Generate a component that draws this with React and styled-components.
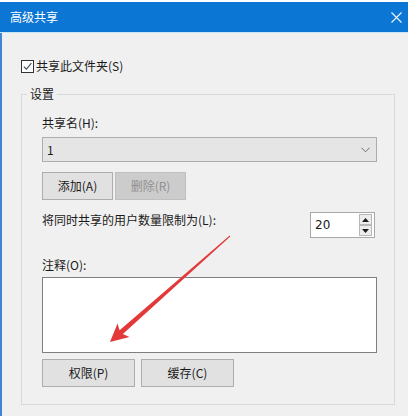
import React from 'react';
import styled, { createGlobalStyle } from 'styled-components';

const GlobalStyle = createGlobalStyle`
  html, body {
    margin: 0;
    padding: 0;
    background: #ffffff;
  }
  body {
    font-family: "Noto Sans CJK SC", "Noto Sans", sans-serif;
    font-size: 12px;
    color: #1a1a1a;
  }
`;

const Window = styled.div`
  position: relative;
  width: 408px;
  height: 416px;
  display: flex;
  flex-direction: column;
  padding-top: 2px;
  box-sizing: border-box;
  overflow: hidden;
`;

const TitleBar = styled.div`
  height: 30px;
  background: #0b76d4;
  border-bottom: 1px solid #c6e6f8;
  display: flex;
  align-items: center;
  justify-content: space-between;
  padding: 0 6px 0 10px;
  color: #ffffff;
  line-height: 16px;
`;

const Body = styled.div`
  flex: 1;
  background: #f0f0f0;
  border-left: 2px solid #3f86d2;
  padding: 25px 13px 0 19px;
  display: flex;
  flex-direction: column;
`;

const CheckRow = styled.label`
  display: flex;
  align-items: center;
  gap: 2px;
  line-height: 16px;
  height: 16px;
`;

const CheckBox = styled.span`
  width: 11px;
  height: 11px;
  border: 1px solid #333333;
  background: #ffffff;
  display: flex;
  align-items: center;
  justify-content: center;
`;

const Group = styled.fieldset`
  margin: 12px 0 0 0;
  border: 1px solid #d9d9d9;
  padding: 13px 17px 17px 20px;
  display: flex;
  flex-direction: column;
`;

const Legend = styled.legend`
  padding: 0 3px;
  margin-left: -15px;
  line-height: 16px;
`;

const Label = styled.div`
  line-height: 16px;
  margin-top: ${({ top }) => top || 0}px;
`;

const Select = styled.div`
  margin-top: 6px;
  height: 25px;
  box-sizing: border-box;
  border: 1px solid #adadad;
  background: #e5e5e5;
  display: flex;
  align-items: center;
  justify-content: space-between;
  padding: 0 6px 0 4px;
`;

const ButtonRow = styled.div`
  display: flex;
  gap: ${({ gap }) => gap}px;
  margin-top: ${({ top }) => top}px;
`;

const Button = styled.button`
  width: ${({ w }) => w}px;
  height: 28px;
  box-sizing: border-box;
  border: 1px solid ${({ disabled }) => (disabled ? '#bfbfbf' : '#adadad')};
  background: ${({ disabled }) => (disabled ? '#cccccc' : '#e1e1e1')};
  color: ${({ disabled }) => (disabled ? '#909090' : '#1a1a1a')};
  font-family: inherit;
  font-size: 12px;
  padding: 0;
  line-height: 16px;
`;

const LimitRow = styled.div`
  margin-top: 12px;
  display: flex;
  justify-content: space-between;
  align-items: flex-start;
  padding-right: 2px;
`;

const Spin = styled.div`
  width: 65px;
  height: 26px;
  box-sizing: border-box;
  border: 1px solid #a8a8a8;
  background: #ffffff;
  display: flex;
  align-items: center;
  justify-content: space-between;
  padding: 1px 2px 1px 4px;
  font-family: "DejaVu Sans", sans-serif;
  font-size: 12px;
`;

const SpinButtons = styled.div`
  display: flex;
  flex-direction: column;
  height: 100%;
`;

const SpinButton = styled.div`
  width: 13px;
  flex: 1;
  box-sizing: border-box;
  border: 1px solid #b8b8b8;
  background: #ececec;
  display: flex;
  align-items: center;
  justify-content: center;
`;

const TextArea = styled.div`
  margin-top: 4px;
  height: 76px;
  box-sizing: border-box;
  border: 1px solid #7f7f7f;
  background: #ffffff;
`;

const Arrow = styled.svg`
  position: absolute;
  left: 0;
  top: 0;
  pointer-events: none;
`;

export default function App() {
  return (
    <>
      <GlobalStyle />
      <Window>
        <TitleBar>
          <span>高级共享</span>
          <svg width="11" height="11" viewBox="0 0 11 11">
            <path d="M0.5 0.5 L10.5 10.5 M10.5 0.5 L0.5 10.5" stroke="#e8f4fd" strokeWidth="1.2" />
          </svg>
        </TitleBar>
        <Body>
          <CheckRow>
            <CheckBox>
              <svg width="9" height="9" viewBox="0 0 9 9">
                <path d="M0.8 4.6 L3.4 7.2 L8.4 1.2" fill="none" stroke="#3c4a5a" strokeWidth="1.1" />
              </svg>
            </CheckBox>
            <span>共享此文件夹(S)</span>
          </CheckRow>
          <Group>
            <Legend>设置</Legend>
            <Label>共享名(H):</Label>
            <Select>
              <span>1</span>
              <svg width="9" height="6" viewBox="0 0 9 6">
                <path d="M0.5 0.8 L4.5 4.8 L8.5 0.8" fill="none" stroke="#6d6d6d" strokeWidth="1" />
              </svg>
            </Select>
            <ButtonRow gap={2} top={10}>
              <Button w={71}>添加(A)</Button>
              <Button w={71} disabled>删除(R)</Button>
            </ButtonRow>
            <LimitRow>
              <Label>将同时共享的用户数量限制为(L):</Label>
              <Spin>
                <span>20</span>
                <SpinButtons>
                  <SpinButton>
                    <svg width="7" height="4" viewBox="0 0 7 4"><path d="M0 4 L3.5 0 L7 4 Z" fill="#1a1a1a" /></svg>
                  </SpinButton>
                  <SpinButton>
                    <svg width="7" height="4" viewBox="0 0 7 4"><path d="M0 0 L3.5 4 L7 0 Z" fill="#1a1a1a" /></svg>
                  </SpinButton>
                </SpinButtons>
              </Spin>
            </LimitRow>
            <Label top={19}>注释(O):</Label>
            <TextArea />
            <ButtonRow gap={6} top={6}>
              <Button w={93}>权限(P)</Button>
              <Button w={93}>缓存(C)</Button>
            </ButtonRow>
          </Group>
        </Body>
        <Arrow width="408" height="416" viewBox="0 0 408 416">
          <polygon
            points="110,342 129.5,336.9 122.9,333.9 230.3,236.4 229.7,235.6 119.6,330.2 117.5,323.4"
            fill="#e23a3a"
          />
        </Arrow>
      </Window>
    </>
  );
}
